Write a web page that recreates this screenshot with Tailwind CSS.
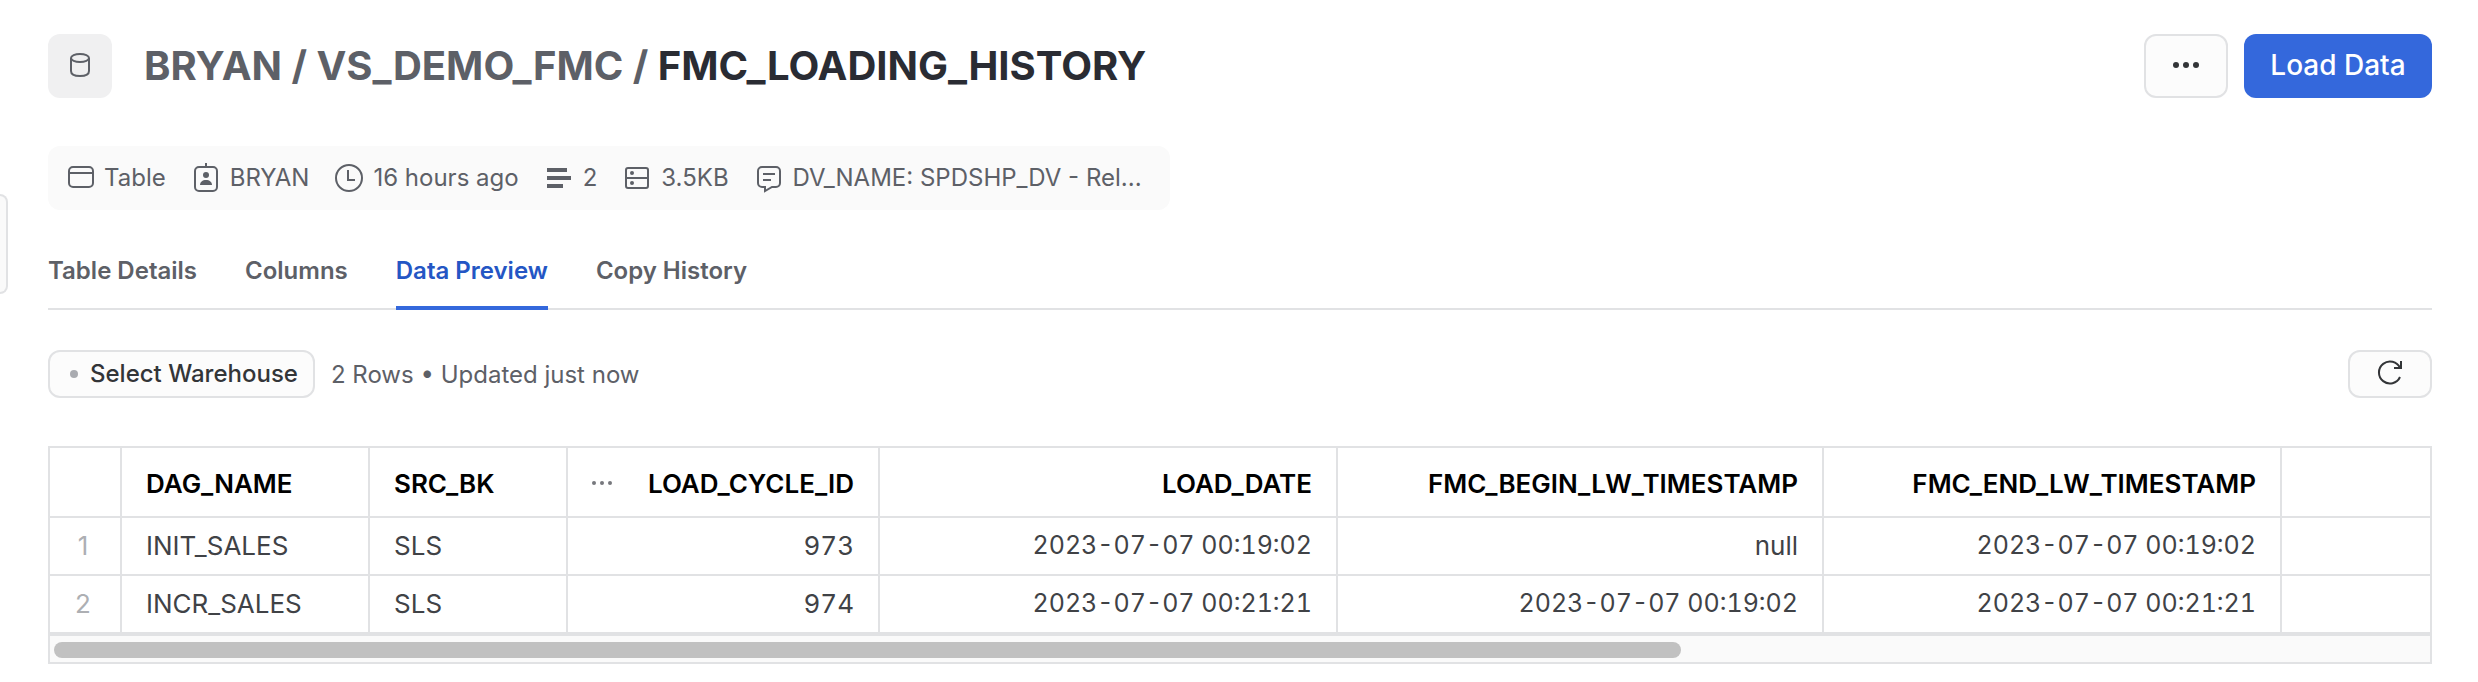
<!DOCTYPE html>
<html lang="en">
<head>
    <meta charset="UTF-8">
    <meta name="viewport" content="width=device-width, initial-scale=1.0">
    <title>FMC_LOADING_HISTORY</title>
    <script src="https://cdn.jsdelivr.net/npm/@tailwindcss/browser@4"></script>
</head>
<body class="relative min-h-screen bg-white font-['Inter',sans-serif] text-2xl text-[#5d6067]">
    <!-- edge of the collapsed side panel -->
    <div class="absolute left-0 top-[194px] h-[100px] w-2 rounded-r-xl border-2 border-l-0 border-[#e1e2e4] bg-[#fafafa]"></div>

    <main class="pl-12 pr-[46px] pt-[34px]">
        <header class="flex items-center justify-between">
            <div class="flex items-center gap-8">
                <div class="flex size-16 items-center justify-center rounded-xl bg-[#f0f0f1]">
                    <svg class="size-8" viewBox="0 0 32 32" fill="none" stroke="#5d6067" stroke-width="2">
                        <ellipse cx="16" cy="8" rx="9" ry="4"/>
                        <path d="M7 8v13c0 3 3 5 9 5s9-2 9-5v-13"/>
                    </svg>
                </div>
                <h1 class="text-[40px] font-bold leading-[48px]">BRYAN / VS_DEMO_FMC / <span class="text-[#2a2c33]">FMC_LOADING_HISTORY</span></h1>
            </div>
            <div class="flex gap-4">
                <button type="button" aria-label="More" class="flex h-16 w-[84px] items-center justify-center rounded-xl border-2 border-[#e1e2e4] bg-[#fcfcfc]">
                    <svg class="size-8" viewBox="0 0 32 32" fill="#333538"><circle cx="6" cy="15" r="3"/><circle cx="16" cy="15" r="3"/><circle cx="26" cy="15" r="3"/></svg>
                </button>
                <button type="button" class="h-16 w-[188px] rounded-xl bg-[#3468dc] text-[28px] font-medium text-white">Load Data</button>
            </div>
        </header>

        <div class="mt-12 flex h-16 w-fit items-center gap-6 rounded-xl bg-[#fafafa] pl-4 pr-7">
            <div class="flex items-center gap-2">
                <svg class="size-8" viewBox="0 0 32 32" fill="none" stroke="#5d6067" stroke-width="2"><rect x="5" y="5" width="24" height="20" rx="4"/><path d="M5 11h24"/></svg>
                <span>Table</span>
            </div>
            <div class="flex items-center gap-2">
                <svg class="size-8" viewBox="0 0 32 32" fill="none" stroke="#5d6067" stroke-width="2"><rect x="5" y="5" width="22" height="24" rx="4"/><path d="M16 1v5"/><circle cx="16" cy="13" r="3" fill="#5d6067" stroke="none"/><path d="M10 23c0-3 2.500-5 6-5s6 2 6 5z" fill="#5d6067" stroke="none"/></svg>
                <span>BRYAN</span>
            </div>
            <div class="flex items-center gap-2">
                <svg class="size-8" viewBox="0 0 32 32" fill="none" stroke="#5d6067" stroke-width="2"><circle cx="16" cy="16" r="13"/><path d="M15 8v10h7"/></svg>
                <span>16 hours ago</span>
            </div>
            <div class="flex items-center gap-2">
                <svg class="size-8" viewBox="0 0 32 32" fill="#5d6067"><path d="M4 6h20v4H4zM4 14h24v4H4zM4 22h16v4H4z"/></svg>
                <span>2</span>
            </div>
            <div class="flex items-center gap-2">
                <svg class="size-8" viewBox="0 0 32 32" fill="none" stroke="#5d6067" stroke-width="2"><rect x="5" y="6" width="22" height="20" rx="2"/><path d="M5 16h22"/><circle cx="11" cy="11" r="2" fill="#5d6067" stroke="none"/><circle cx="11" cy="21" r="2" fill="#5d6067" stroke="none"/></svg>
                <span>3.5KB</span>
            </div>
            <div class="flex items-center gap-2">
                <svg class="size-8" viewBox="0 0 32 32" fill="none" stroke="#5d6067" stroke-width="2"><path d="M9 5h14a4 4 0 0 1 4 4v12a4 4 0 0 1-4 4h-4l-7 4v-4H9a4 4 0 0 1-4-4V9a4 4 0 0 1 4-4zM10 12h12M10 18h8"/></svg>
                <span>DV_NAME: SPDSHP_DV - Rel...</span>
            </div>
        </div>

        <nav class="mt-9 flex h-16 gap-12 border-b-2 border-[#e1e2e4] font-semibold leading-[50px]">
            <a href="#">Table Details</a>
            <a href="#">Columns</a>
            <a href="#" class="h-16 border-b-4 border-[#3468dc] text-[#2456c4]">Data Preview</a>
            <a href="#">Copy History</a>
        </nav>

        <div class="mt-10 flex items-center justify-between">
            <div class="flex items-center gap-4">
                <button type="button" class="flex h-12 items-center gap-3 rounded-xl border-2 border-[#e1e2e4] bg-[#fcfcfc] pl-4 pr-[15px] font-medium text-[#333538]">
                    <span class="ml-1 size-2 rounded-full bg-[#a9abb0]"></span>Select Warehouse
                </button>
                <p class="pt-0.5">2 Rows • Updated just now</p>
            </div>
            <button type="button" aria-label="Refresh" class="flex h-12 w-[84px] items-center justify-center rounded-xl border-2 border-[#e1e2e4] bg-[#fcfcfc]">
                <svg class="size-8" viewBox="0 0 32 32" fill="none" stroke="#333538" stroke-width="2"><path d="M26 19a11 11 0 1 1 0-9M27 3v7h-7"/></svg>
            </button>
        </div>

        <div class="mt-12 overflow-hidden border-2 border-[#e1e2e4]">
            <table class="w-full table-fixed border-separate border-spacing-0 text-[26px] text-[#404246] [&_td]:border-b-2 [&_td]:border-r-2 [&_td]:border-[#e1e2e4] [&_td]:px-6 [&_th]:border-b-2 [&_th]:border-r-2 [&_th]:border-[#e1e2e4] [&_th]:px-6 [&_th]:pt-1 [&_th]:font-semibold">
                <colgroup>
                    <col class="w-[72px]"><col class="w-[248px]"><col class="w-[198px]"><col class="w-[312px]">
                    <col class="w-[458px]"><col class="w-[486px]"><col class="w-[458px]"><col>
                </colgroup>
                <thead>
                    <tr class="h-[70px] text-right text-black">
                        <th></th>
                        <th class="text-left">DAG_NAME</th>
                        <th class="text-left">SRC_BK</th>
                        <th>
                            <div class="flex items-center justify-between">
                                <svg class="size-5" viewBox="0 0 20 20" fill="#76787d"><circle cx="2" cy="9" r="2"/><circle cx="10" cy="9" r="2"/><circle cx="18" cy="9" r="2"/></svg>
                                LOAD_CYCLE_ID
                            </div>
                        </th>
                        <th>LOAD_DATE</th>
                        <th>FMC_BEGIN_LW_TIMESTAMP</th>
                        <th>FMC_END_LW_TIMESTAMP</th>
                        <th class="border-r-0!"></th>
                    </tr>
                </thead>
                <tbody>
                    <tr class="h-[58px] text-right">
                        <td class="pl-0! pr-1! text-center text-[#adafb3]">1</td>
                        <td class="text-left">INIT_SALES</td>
                        <td class="text-left">SLS</td>
                        <td class="tabular-nums">973</td>
                        <td class="text-[25px] tabular-nums">2023-07-07 00:19:02</td>
                        <td>null</td>
                        <td class="text-[25px] tabular-nums">2023-07-07 00:19:02</td>
                        <td class="border-r-0!"></td>
                    </tr>
                    <tr class="h-[58px] text-right">
                        <td class="pl-0! pr-1! text-center text-[#adafb3]">2</td>
                        <td class="text-left">INCR_SALES</td>
                        <td class="text-left">SLS</td>
                        <td class="tabular-nums">974</td>
                        <td class="text-[25px] tabular-nums">2023-07-07 00:21:21</td>
                        <td class="text-[25px] tabular-nums">2023-07-07 00:19:02</td>
                        <td class="text-[25px] tabular-nums">2023-07-07 00:21:21</td>
                        <td class="border-r-0!"></td>
                    </tr>
                </tbody>
            </table>
            <!-- horizontal scrollbar -->
            <div class="h-7 border-t-2 border-[#e1e2e4] bg-[#fafafa] px-1 py-[6px]">
                <div class="h-4 w-[68.6%] rounded-full bg-[#c1c1c1]"></div>
            </div>
        </div>
    </main>
</body>
</html>
